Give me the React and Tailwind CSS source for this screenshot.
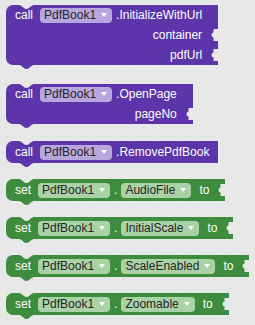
const tones = {
  purple: { block: 'bg-[#5b35a9]', fill: '#5b35a9', dd: 'bg-[#b8a7de]' },
  green: { block: 'bg-[#3e8c3e]', fill: '#3e8c3e', dd: 'bg-[#aad2a7]' },
};

const BG = '#e8e8e8';

function Dropdown({ label, tone }) {
  return (
    <span className={`flex h-[15px] items-center gap-[5px] rounded-[4px] pl-[4px] pr-[5px] text-[#262626] ${tones[tone].dd}`}>
      {label}
      <svg width="6" height="4" viewBox="0 0 6 4">
        <path d="M0 0h6L3 4z" fill="#ffffff" />
      </svg>
    </span>
  );
}

function Socket() {
  return (
    <svg className="absolute right-0 top-1/2 -translate-y-1/2" width="7" height="12" viewBox="0 0 7 12">
      <path d="M7 0H2.5V3.5C0 3.5 0 8.5 2.5 8.5V12H7Z" fill={BG} />
    </svg>
  );
}

function Block({ tone, children, inputs = [], socket = false, className = '' }) {
  const t = tones[tone];
  const wide = inputs.length > 0 || socket;
  return (
    <div className={`relative self-start rounded-l-[7px] ${t.block} ${className}`}>
      {/* top notch */}
      <svg className="absolute left-[13px] top-0" width="15" height="4" viewBox="0 0 15 4">
        <path d="M0 0C3 0 4.5 4 7.5 4S12 0 15 0Z" fill={BG} />
      </svg>
      <div
        className={`relative flex items-center gap-[7px] pl-[9px] ${wide ? 'pr-[16px]' : 'pr-[9px]'} ${
          inputs.length ? 'h-[20px]' : 'h-[22px]'
        }`}
      >
        {children}
        {socket && <Socket />}
      </div>
      {inputs.map((name) => (
        <div key={name} className="relative flex h-[20px] items-center justify-end pr-[16px]">
          {name}
          <Socket />
        </div>
      ))}
      {/* bottom tab */}
      <svg className="absolute -bottom-[4px] left-[13px]" width="15" height="4" viewBox="0 0 15 4">
        <path d="M0 0C3 0 4.5 4 7.5 4S12 0 15 0Z" fill={t.fill} />
      </svg>
    </div>
  );
}

function Call({ method, inputs, className }) {
  return (
    <Block tone="purple" inputs={inputs} className={className}>
      <span>call</span>
      <span className="flex items-center gap-[4px]">
        <Dropdown label="PdfBook1" tone="purple" />
        <span>.{method}</span>
      </span>
    </Block>
  );
}

function Setter({ prop, className }) {
  return (
    <Block tone="green" socket className={className}>
      <span>set</span>
      <span className="flex items-center gap-[4px]">
        <Dropdown label="PdfBook1" tone="green" />
        <span>.</span>
        <Dropdown label={prop} tone="green" />
      </span>
      <span className="ml-[1px]">to</span>
    </Block>
  );
}

export default function App() {
  return (
    <div className="flex h-[325px] w-[255px] flex-col overflow-hidden bg-[#e8e8e8] bg-[radial-gradient(circle,#d2d2d2_0.8px,transparent_1px)] bg-[size:13px_13px] pl-[6px] pt-[5px] font-['Liberation_Sans',Arial,sans-serif] text-[12px] leading-none text-white">
      <Call method="InitializeWithUrl" inputs={['container', 'pdfUrl']} />
      <Call method="OpenPage" inputs={['pageNo']} className="mt-[19px]" />
      <Call method="RemovePdfBook" className="mt-[17px]" />
      <Setter prop="AudioFile" className="mt-[16px]" />
      <Setter prop="InitialScale" className="mt-[16px]" />
      <Setter prop="ScaleEnabled" className="mt-[16px]" />
      <Setter prop="Zoomable" className="mt-[16px]" />
    </div>
  );
}
